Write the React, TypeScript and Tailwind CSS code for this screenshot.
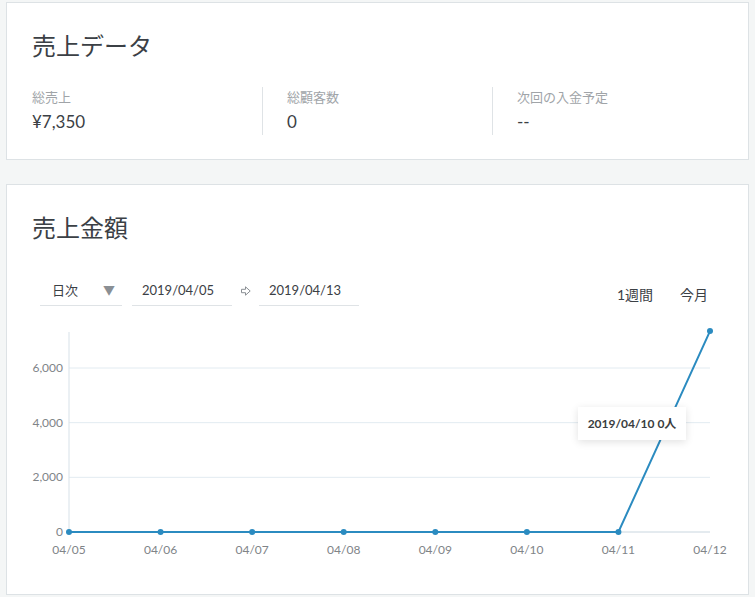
import React from 'react';

const FONT = { fontFamily: 'Lato, "Noto Sans CJK JP", "Noto Sans", sans-serif' };

const stats = [
  { label: '総売上', value: '¥7,350' },
  { label: '総顧客数', value: '0' },
  { label: '次回の入金予定', value: '--' },
];

const days = ['04/05', '04/06', '04/07', '04/08', '04/09', '04/10', '04/11', '04/12'];
const values = [0, 0, 0, 0, 0, 0, 0, 7350];

// chart geometry (svg coords)
const X0 = 62;
const X1 = 703;
const Y0 = 220; // value 0
const STEP = (X1 - X0) / (days.length - 1);
const yOf = (v: number) => Y0 - (v / 6000) * 164;

function SalesChart() {
  const pts = values.map((v, i) => [X0 + i * STEP, yOf(v)]);
  const ticks = [0, 2000, 4000, 6000];
  return (
    <div className="relative mt-[6px]">
      <svg width={741} height={262} viewBox="0 0 741 262" className="block">
        {ticks.map((t) => (
          <g key={t}>
            <line x1={X0} x2={X1} y1={yOf(t)} y2={yOf(t)} stroke={t === 0 ? '#c9d6df' : '#e2ebf1'} strokeWidth={1} />
            <text x={56} y={yOf(t) + 4} textAnchor="end" fontSize={12} fill="#808488" style={FONT}>
              {t.toLocaleString('en-US')}
            </text>
          </g>
        ))}
        <line x1={X0} x2={X0} y1={20} y2={Y0} stroke="#d7e1e8" strokeWidth={1} />
        {days.map((d, i) => (
          <text key={d} x={X0 + i * STEP} y={242} textAnchor="middle" fontSize={12} fill="#808488" style={FONT}>
            {d}
          </text>
        ))}
        <polyline
          points={pts.map((p) => p.join(',')).join(' ')}
          fill="none"
          stroke="#2b8bc0"
          strokeWidth={2}
        />
        {pts.map((p, i) => (
          <circle key={i} cx={p[0]} cy={p[1]} r={3} fill="#2b8bc0" />
        ))}
      </svg>
      {/* tooltip */}
      <div className="absolute left-[571px] top-[95px] w-[108px] h-[33px] bg-white shadow-[0_2px_8px_rgba(0,0,0,0.12)] flex items-center justify-center text-[12px] font-bold text-[#3a3d40]">
        2019/04/10 0人
      </div>
    </div>
  );
}

export default function App() {
  return (
    <div className="min-h-screen bg-[#f4f6f6] px-[6px] pt-[2px] pb-[2px] text-[#3b4045]" style={FONT}>
      {/* 売上データ */}
      <div className="h-[158px] border border-[#dde2e5] bg-white pl-[25px] pt-[27px]">
        <h2 className="text-[24px] leading-[32px] font-normal text-[#3b4045]">売上データ</h2>
        <div className="mt-[25px] flex">
          {stats.map((s, i) => (
            <div
              key={s.label}
              className={`w-[230px] h-[48px] ${i > 0 ? 'border-l border-[#dfe3e6] pl-[24px]' : ''}`}
            >
              <div className="text-[13px] leading-[20px] text-[#a0a4a8]">{s.label}</div>
              <div className="text-[17px] leading-[24px] text-[#3b4045] mt-[3px]">{s.value}</div>
            </div>
          ))}
        </div>
      </div>

      {/* 売上金額 */}
      <div className="mt-[24px] h-[411px] border border-[#dde2e5] bg-white pt-[27px]">
        <h2 className="pl-[25px] text-[24px] leading-[32px] font-normal text-[#3b4045]">売上金額</h2>
        <div className="mt-[32px] flex items-center pl-[33px] pr-[40px]">
          <div className="w-[82px] h-[30px] border-b border-[#dfe3e6] flex items-center justify-between pl-[12px] pr-[7px] text-[13px]">
            <span>日次</span>
            <span className="text-[#8a8f94] text-[12px]">▼</span>
          </div>
          <div className="ml-[10px] w-[100px] h-[30px] border-b border-[#dfe3e6] flex items-center pl-[10px] text-[13px]">
            2019/04/05
          </div>
          <svg width={10} height={10} viewBox="0 0 10 10" className="ml-[9px] mr-[8px]">
            <path d="M0.5 3.3H4.5V0.8L9.2 5L4.5 9.2V6.7H0.5Z" fill="none" stroke="#8a8f94" strokeWidth={1} />
          </svg>
          <div className="w-[100px] h-[30px] border-b border-[#dfe3e6] flex items-center pl-[10px] text-[13px]">
            2019/04/13
          </div>
          <div className="ml-auto flex gap-[27px] text-[14px] pt-[6px]">
            <span>1週間</span>
            <span>今月</span>
          </div>
        </div>
        <SalesChart />
      </div>
    </div>
  );
}
